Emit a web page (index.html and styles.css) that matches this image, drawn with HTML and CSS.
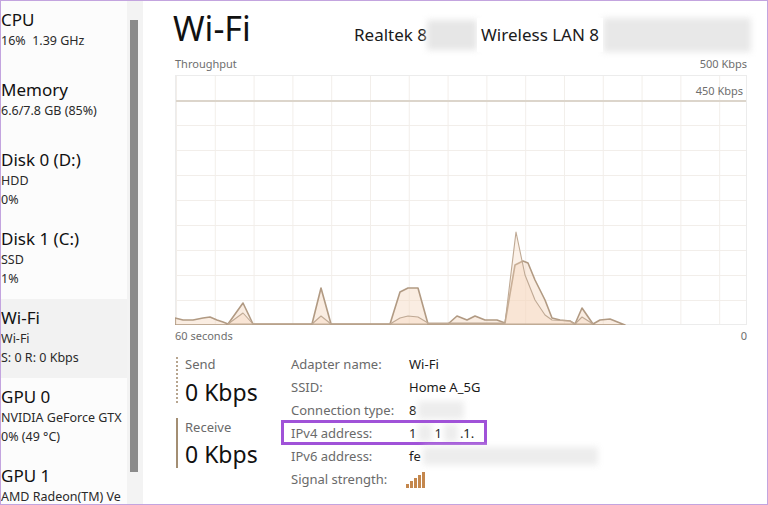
FILE: index.html
```html
<!DOCTYPE html>
<html>
<head>
<meta charset="utf-8">
<link rel="stylesheet" href="styles.css">
</head>
<body>
<div class="window">
  <div class="sidebar">
    <div class="item"><div class="t">CPU</div><div class="s">16%&nbsp; 1.39 GHz</div></div>
    <div class="item"><div class="t">Memory</div><div class="s">6.6/7.8 GB (85%)</div></div>
    <div class="item"><div class="t">Disk 0 (D:)</div><div class="s">HDD</div><div class="s">0%</div></div>
    <div class="item"><div class="t">Disk 1 (C:)</div><div class="s">SSD</div><div class="s">1%</div></div>
    <div class="item sel"><div class="t">Wi-Fi</div><div class="s">Wi-Fi</div><div class="s">S: 0 R: 0 Kbps</div></div>
    <div class="item"><div class="t">GPU 0</div><div class="s">NVIDIA GeForce GTX</div><div class="s">0% (49 °C)</div></div>
    <div class="item"><div class="t">GPU 1</div><div class="s">AMD Radeon(TM) Ve</div></div>
  </div>
  <div class="scroll"><div class="thumb"></div></div>
  <div class="main">
    <div class="header">
      <div class="title">Wi-Fi</div>
      <div class="adapter">
        <span>Realtek 8</span><span class="blur b1"></span><span class="clear">Wireless LAN 8</span><span class="blur b2"></span>
      </div>
    </div>
    <div class="glabels"><span>Throughput</span><span>500 Kbps</span></div>
    <div class="graph">
      <div class="line450"></div>
      <div class="l450">450 Kbps</div>
      <svg class="traces" width="572" height="250" viewBox="0 0 572 250">
        <path class="recv" d="M0 243 L8 245 L18 245 L28 243 L35 242 L42 245 L48 247 L53 249 L68 228 L78 249 L137 249 L146 213 L156 249 L215 249 L225 217 L233 213 L243 213 L253 249 L273 249 L282 241 L292 245 L300 241 L310 245 L322 245 L330 248 L340 190 L348 186 L353 188 L360 205 L370 225 L377 243 L385 245 L395 246 L400 249 L407 233 L418 249 L425 245 L435 244 L445 248 L450 250 L0 250 Z"/>
        <path class="send" d="M53 249 L68 238 L78 249 L137 249 L146 241 L156 249 L215 249 L225 243 L233 241 L243 242 L253 248 L330 248 L341 157 L350 200 L360 225 L370 240 L377 245 L395 246 L400 249 L407 242 L418 249 L53 249 Z"/>
      </svg>
    </div>
    <div class="glabels bottom"><span>60 seconds</span><span>0</span></div>
    <div class="details">
      <div class="rates">
        <div class="rate send-rate"><div class="rl">Send</div><div class="rv">0 Kbps</div></div>
        <div class="rate recv-rate"><div class="rl">Receive</div><div class="rv">0 Kbps</div></div>
      </div>
      <div class="props">
        <div class="row"><span class="k">Adapter name:</span><span class="v">Wi-Fi</span></div>
        <div class="row"><span class="k">SSID:</span><span class="v">Home A_5G</span></div>
        <div class="row"><span class="k">Connection type:</span><span class="v">8<span class="blur b3"></span></span></div>
        <div class="row hl"><span class="k">IPv4 address:</span><span class="v">1<span class="blur b4"></span>1<span class="blur b4"></span>.1.</span></div>
        <div class="row"><span class="k">IPv6 address:</span><span class="v">fe<span class="blur b5"></span></span></div>
        <div class="row"><span class="k">Signal strength:</span><span class="v">
          <svg class="signal" width="19" height="17" viewBox="0 0 19 17">
            <rect x="0" y="13" width="3" height="4"/>
            <rect x="4" y="10" width="3" height="7"/>
            <rect x="8" y="7" width="3" height="10"/>
            <rect x="12" y="4" width="3" height="13"/>
            <rect x="16" y="1" width="3" height="16"/>
          </svg></span></div>
      </div>
    </div>
  </div>
</div>
</body>
</html>
```
FILE: styles.css
```css
*, *::before, *::after { box-sizing: border-box; }
html, body { margin: 0; padding: 0; background: #fff; }
body { font-family: "Noto Sans", "Open Sans", sans-serif; color: #1a1a1a; }
.window {
  width: 768px; height: 505px;
  border: 1px solid #c3a4df;
  display: flex; overflow: hidden;
  background: #fff;
}
.sidebar { width: 126px; flex: none; overflow: hidden; background: #fcfcfc; }
.item { min-height: 70px; padding: 8px 0 11px 0; white-space: nowrap; }
.item.sel { background: #f2f2f2; }
.t { font-size: 17px; line-height: 22px; color: #111; }
.s { font-size: 12.5px; line-height: 19px; color: #2a2a2a; }
.scroll { width: 16px; flex: none; background: #f3f3f3; padding: 19px 0 0 3px; }
.thumb { width: 8px; height: 452px; background: #8b8b8b; }
.main { flex: 1; padding-left: 31px; position: relative; }
.header { display: flex; align-items: baseline; height: 54px; padding-top: 7px; }
.title { font-size: 34px; line-height: 40px; color: #111; width: 181px; margin-left: -1px; }
.adapter { display: flex; align-items: baseline; font-size: 17px; color: #1a1a1a; }
.adapter span { line-height: 34px; }
.blur { display: inline-block; background: #e6e6e6; filter: blur(3px); vertical-align: middle; }
.adapter .blur { align-self: center; }
.b1 { width: 50px; height: 30px; }
.clear { background: #fff; padding: 0 4px; position: relative; z-index: 1; }
.b2 { width: 148px; height: 34px; background: #e8e8e8; }
.b3 { width: 46px; height: 18px; margin-left: 2px; background: #ededed; }
.b4 { width: 14px; height: 18px; background: #ededed; margin: 0 2px; }
.b5 { width: 175px; height: 18px; margin-left: 2px; background: #ededed; }
.glabels { display: flex; justify-content: space-between; width: 572px; margin-left: 1px; font-size: 11px; line-height: 16px; color: #6e6e6e; height: 20px; padding-top: 1px; }
.glabels.bottom { height: 24px; padding-top: 3px; }
.graph {
  width: 572px; height: 250px; margin-left: 1px; position: relative;
  border: 1px solid #ececec;
  background-color: #fff;
  background-image:
    linear-gradient(to right, #f2eeea 1px, transparent 1px),
    linear-gradient(to bottom, #f2eeea 1px, transparent 1px);
  background-size: 38.8px 25px, 38.8px 25px;
  background-position: 0 0, 0 -1px;
}
.line450 { position: absolute; left: 0; right: 0; top: 24px; height: 2px; background: #dcd5cb; }
.l450 { position: absolute; right: 3px; top: 8px; font-size: 11px; color: #6e6e6e; line-height: 14px; }
.traces { position: absolute; left: -1px; top: -1px; }
.recv { fill: rgba(245, 214, 190, 0.45); stroke: #b19a83; stroke-width: 1.6; stroke-linejoin: round; }
.send { fill: rgba(245, 214, 190, 0.35); stroke: #bfa994; stroke-width: 1.1; stroke-linejoin: round; }
.details { display: flex; padding-top: 3px; }
.rates { width: 115px; margin-left: 2px; padding-top: 5px; }
.rate { padding-left: 7px; }
.send-rate { border-left: 2px dotted #b7a58f; height: 46px; margin-bottom: 15px; }
.recv-rate { border-left: 2px solid #a38e73; height: 50px; padding-top: 2px; }
.rl { font-size: 13px; line-height: 14px; color: #6a6a6a; }
.send-rate .rv { margin-top: 6px; }
.recv-rate .rv { margin-top: 5px; }
.rv { font-size: 23px; line-height: 30px; color: #111; }
.row { display: flex; height: 23px; align-items: center; font-size: 13px; position: relative; }
.row .k { width: 118px; color: #6a6a6a; }
.row .v { color: #1a1a1a; display: flex; align-items: center; }
.row.hl::after {
  content: ""; position: absolute; left: -10px; top: -1px; width: 206px; height: 25px;
  border: 3px solid #a052d8;
}
.signal rect { fill: #c4874d; }
.signal { margin-left: -3px; margin-top: 2px; }
```
